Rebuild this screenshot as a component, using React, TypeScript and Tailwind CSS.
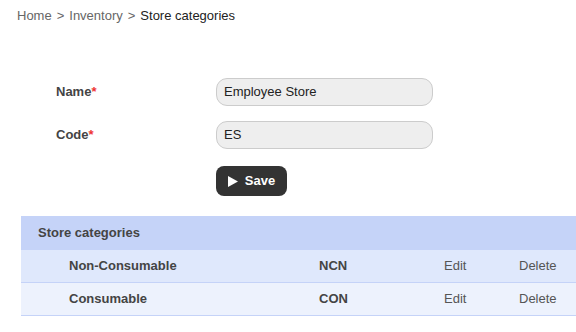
export default function App() {
  const rows = [
    { name: "Non-Consumable", code: "NCN", bg: "bg-[#dfe8fc]" },
    { name: "Consumable", code: "CON", bg: "bg-[#edf2fd]" },
  ];

  return (
    <div
      className="w-[576px] h-[332px] overflow-hidden bg-white text-[13px] text-[#444]"
      style={{ fontFamily: '"Liberation Sans", Arial, sans-serif' }}
    >
      {/* breadcrumb */}
      <div className="pl-[17px] pt-[8px] leading-[16px] text-[#666]">
        <span>Home</span>
        <span className="mx-[5px]">&gt;</span>
        <span>Inventory</span>
        <span className="mx-[5px]">&gt;</span>
        <span className="text-[#222]">Store categories</span>
      </div>

      {/* form */}
      <div className="mt-[54px] pl-[56px] flex flex-col">
        <div className="flex items-center h-[28px]">
          <label className="w-[160px] font-bold">
            Name<span className="text-[#e33]">*</span>
          </label>
          <div className="w-[217px] h-[28px] rounded-[11px] border border-[#ccc] bg-[#eeeeee] px-[7px] flex items-center text-[#222]">
            Employee Store
          </div>
        </div>
        <div className="flex items-center h-[28px] mt-[15px]">
          <label className="w-[160px] font-bold">
            Code<span className="text-[#e33]">*</span>
          </label>
          <div className="w-[217px] h-[28px] rounded-[11px] border border-[#ccc] bg-[#eeeeee] px-[7px] flex items-center text-[#222]">
            ES
          </div>
        </div>
        <div className="pl-[160px] mt-[17px]">
          <button className="w-[71px] h-[30px] rounded-[8px] bg-[#333] text-white font-bold flex items-center justify-center gap-[7px]">
            <svg width="10" height="11" viewBox="0 0 10 11">
              <path d="M0 0 L10 5.5 L0 11 Z" fill="white" />
            </svg>
            <span>Save</span>
          </button>
        </div>
      </div>

      {/* table */}
      <div className="ml-[21px] mt-[20px]">
        <div className="h-[34px] bg-[#c5d3f8] pl-[17px] flex items-center font-bold">
          Store categories
        </div>
        {rows.map((r) => (
          <div
            key={r.code}
            className={`grid grid-cols-[298px_125px_75px_1fr] h-[33px] items-center border-b border-[#c5d3f8] ${r.bg}`}
          >
            <div className="pl-[48px] font-bold">{r.name}</div>
            <div className="font-bold">{r.code}</div>
            <div className="text-[#555]">Edit</div>
            <div className="text-[#555]">Delete</div>
          </div>
        ))}
      </div>
    </div>
  );
}
